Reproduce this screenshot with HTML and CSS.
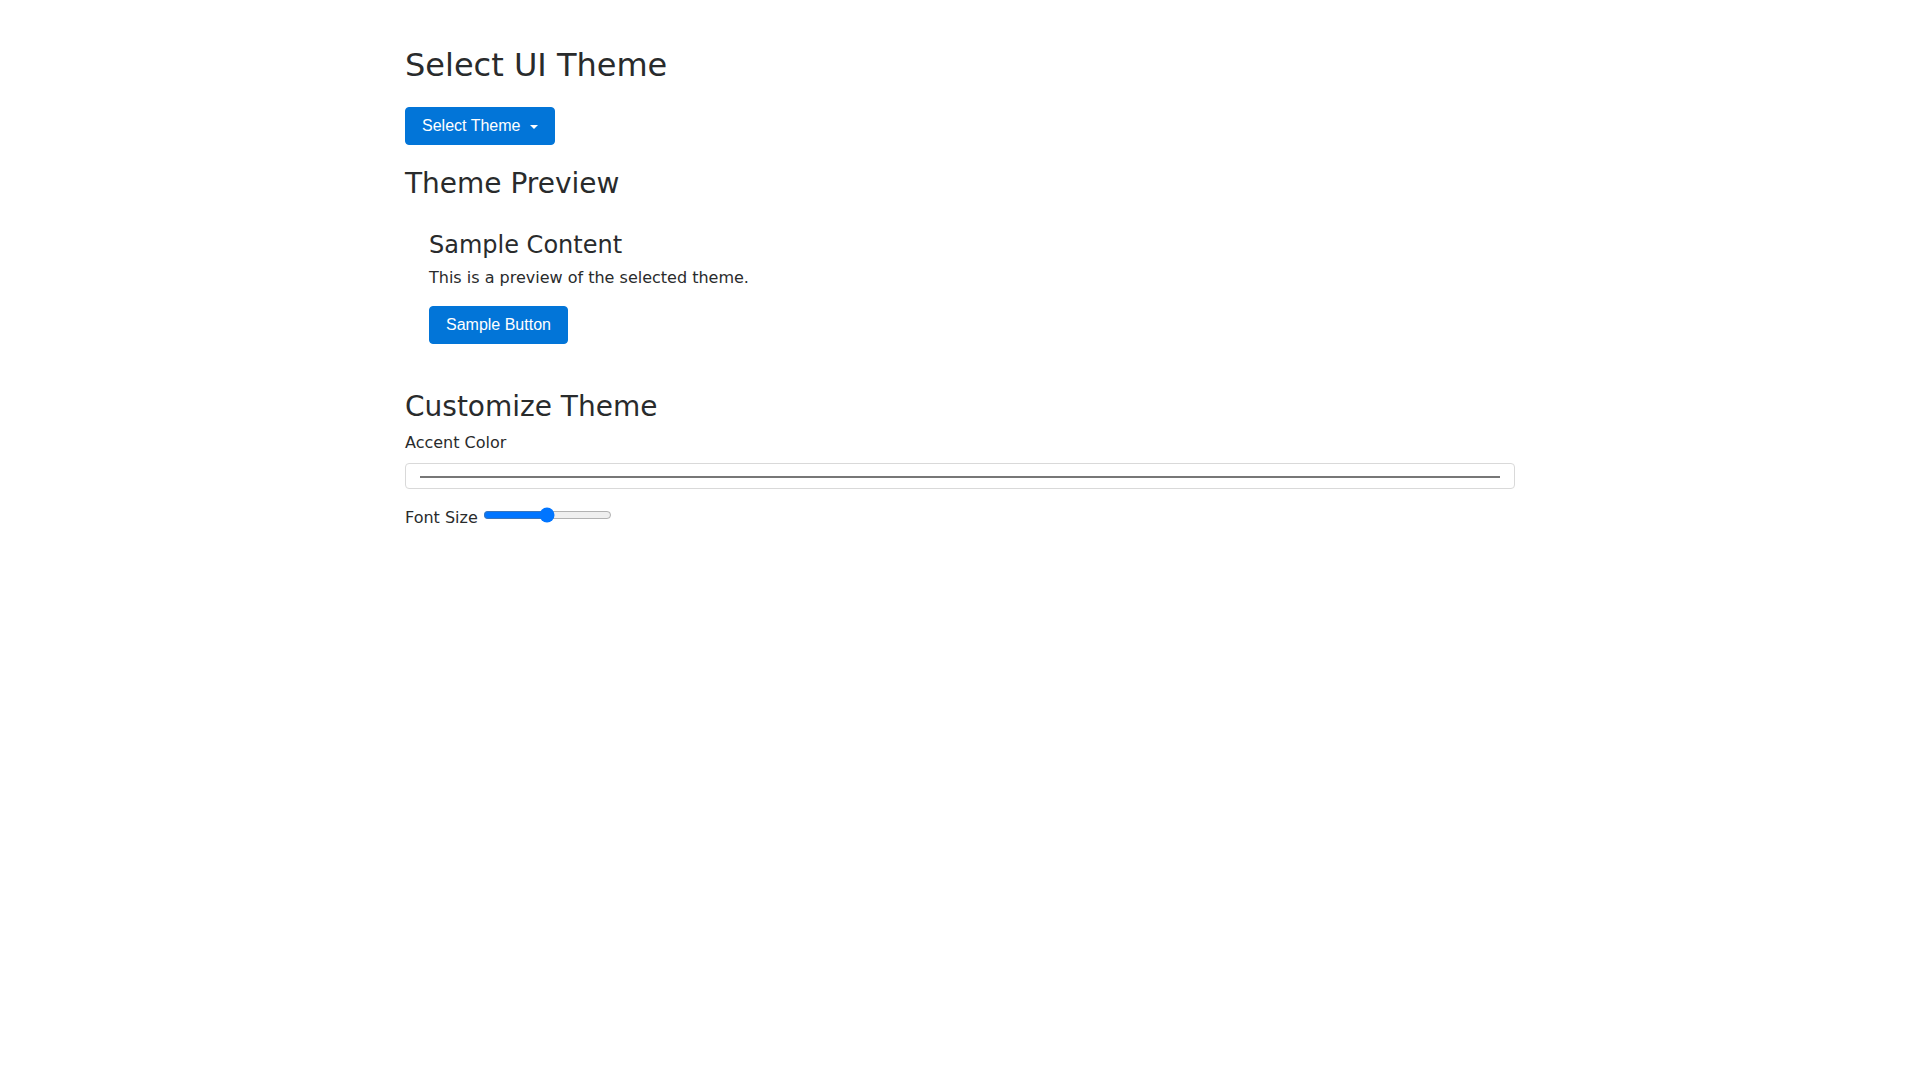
FILE: index.html
```html
<!DOCTYPE html>
<html lang="en">
<head>
    <meta charset="UTF-8">
    <meta name="viewport" content="width=device-width, initial-scale=1.0">
    <title>Select UI Theme</title>
    <link rel="stylesheet" href="styles.css">
</head>
<body>

<div class="container">
    <h1>Select UI Theme</h1>

    <div class="dropdown">
        <button class="btn dropdown-toggle" id="themeButton">Select Theme</button>
    </div>

    <h2>Theme Preview</h2>
    <div class="preview">
        <h3>Sample Content</h3>
        <p>This is a preview of the selected theme.</p>
        <button class="btn">Sample Button</button>
    </div>

    <h2>Customize Theme</h2>
    <div class="form-group">
        <label for="accentColor">Accent Color</label>
        <input type="color" id="accentColor" class="color-input" value="#777777">
    </div>
    <div class="form-group">
        <label for="fontSize">Font Size</label>
        <input type="range" id="fontSize" class="range-input" min="12" max="20" value="16">
    </div>
</div>

</body>
</html>
```

FILE: styles.css
```css
* {
    box-sizing: border-box;
}
body {
    font-family: "DejaVu Sans", sans-serif;
    font-size: 16px;
    line-height: 1.5;
    color: #292b2c;
    margin: 0;
    background-color: #fff;
}
.container {
    width: 1140px;
    margin: 48px auto 0 auto;
    padding: 0 15px;
}
h1, h2, h3 {
    font-weight: 400;
    line-height: 1.1;
    margin: 0 0 8px 0;
}
h1 {
    font-size: 32px;
    margin-bottom: 24px;
}
h2 {
    font-size: 28px;
}
h3 {
    font-size: 24px;
}
p {
    margin: 0 0 16px 0;
}
.dropdown {
    margin-bottom: 24px;
}
.btn {
    font-family: "Liberation Sans", Arial, sans-serif;
    font-size: 16px;
    line-height: 1.25;
    padding: 8px 16px;
    color: #fff;
    background-color: #0275d8;
    border: 1px solid #0275d8;
    border-radius: 4px;
    cursor: pointer;
}
.dropdown-toggle::after {
    content: "";
    display: inline-block;
    margin-left: 10px;
    vertical-align: middle;
    border-top: 4px solid #fff;
    border-left: 4px solid transparent;
    border-right: 4px solid transparent;
}
.preview {
    padding: 24px;
    margin-bottom: 24px;
}
.form-group {
    margin-bottom: 16px;
}
label {
    display: inline-block;
    margin-bottom: 8px;
}
.color-input {
    display: block;
    width: 100%;
    height: 26px;
    padding: 6px 12px;
    margin: 0;
    border: 1px solid #d9d9d9;
    border-radius: 4px;
    background-color: #fff;
    -webkit-appearance: none;
    appearance: none;
}
.color-input::-webkit-color-swatch-wrapper {
    padding: 6px 2px 4px 2px;
}
.color-input::-webkit-color-swatch {
    border: 1px solid #777;
    border-radius: 0;
}
.range-input {
    margin-left: 0;
}
```
